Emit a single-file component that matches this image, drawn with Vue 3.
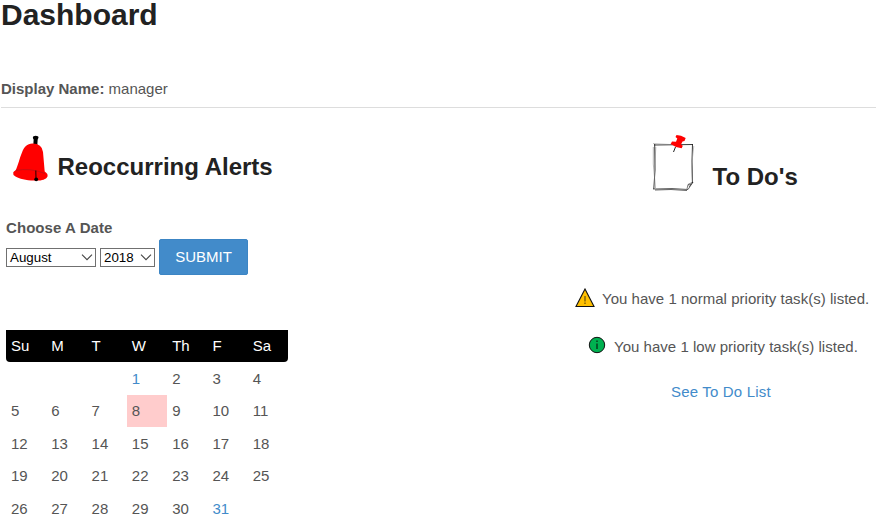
<script setup>
const days = ['Su', 'M', 'T', 'W', 'Th', 'F', 'Sa']
const cells = [...Array(3).fill(''), ...Array.from({ length: 31 }, (_, i) => i + 1)]
const linked = [1, 31]
</script>

<template>
  <main class="page">
    <h1>Dashboard</h1>
    <div class="who"><b>Display Name:</b> manager</div>
    <div class="columns">
      <section class="alerts">
        <div class="heading">
          <svg class="bell" width="36" height="47" viewBox="0 0 36 47">
            <path d="M23.300 10L23.800 2.500" stroke="#000" stroke-width="4" />
            <ellipse cx="23.700" cy="2.700" rx="2.800" ry="1.900" />
            <path d="M3.500 35.500C6 31 7.500 23 10 17.500C12 12 15 8.800 20.500 8.500Q30 8.500 31 17L32.700 36.500C35 38 36 39.500 35.500 41.500C34 45 28 46 22 45.500C14 45.500 7 43.500 3.500 41.500Q.5 39.500 1.200 37.500Q2 36.200 3.500 35.500Z" fill="#f00" />
            <path d="M3.500 35.500Q18 32.500 33 38.500" fill="none" stroke="#b51218" stroke-width=".7" />
            <path d="M23.800 35.500L24 44" stroke="#300" stroke-width="1.100" />
            <circle cx="24.200" cy="44.300" r="1.900" />
          </svg>
          <h2>Reoccurring Alerts</h2>
        </div>
        <label class="choose">Choose A Date</label>
        <div class="controls">
          <div class="select month">August
            <svg width="12" height="7" viewBox="0 0 12 7"><path d="M1 .7L6 5.700L11 .7" /></svg>
          </div>
          <div class="select year">2018
            <svg width="12" height="7" viewBox="0 0 12 7"><path d="M1 .7L6 5.700L11 .7" /></svg>
          </div>
          <button>SUBMIT</button>
        </div>
        <div class="week head"><span v-for="d in days" :key="d">{{ d }}</span></div>
        <div class="week body">
          <span v-for="(c, i) in cells" :key="i" :class="{ today: c === 8, link: linked.includes(c) }">{{ c }}</span>
        </div>
      </section>
      <section class="todo">
        <div class="heading">
          <svg class="note" width="44" height="57" viewBox="0 0 44 57" fill="none" stroke="#222">
            <path d="M2 10L41 9.500" stroke-width=".9" />
            <path d="M1 8.500L18 9.500" stroke="#888" stroke-width=".5" />
            <path d="M2.700 9L3 35L1.800 54" stroke-width=".9" />
            <path d="M1.300 12V29L3.500 53M3.800 12L2.500 38" stroke="#888" stroke-width=".6" />
            <path d="M40.500 9L40 26L40.500 48" stroke-width=".9" />
            <path d="M41.800 11L39.500 31L40.300 48" stroke="#999" stroke-width=".6" />
            <path d="M1 54L20 53.500L36 54.500L41 47M3 55L19 54.500L35 55.500" stroke-width=".7" />
            <path d="M35 54L36 49.500L41 47L37 52M36 50L39 49.500" stroke-width=".6" />
            <path d="M23.500 12L21.500 17" stroke-width="1" />
            <path d="M24.500 0L29 .7L33.700 3L32.500 6L30.500 6.500L29 9.500L30.800 10.700L29.700 13.300L24 12L18.700 9L20 6.500L24 6.700L25.300 3.500L23.500 2Z" fill="#f00" stroke="none" />
          </svg>
          <h2>To Do's</h2>
        </div>
        <div class="task normal">
          <svg width="20" height="20" viewBox="0 0 20 20">
            <path d="M10 1L19 18.500H1Z" fill="#ffc000" stroke="#111" stroke-width="1.100" />
            <path d="M10 8V13.500M10 14.500V16" stroke="#71580c" stroke-width="1.300" />
          </svg>
          <span>You have 1 normal priority task(s) listed.</span>
        </div>
        <div class="task low">
          <svg width="18" height="18" viewBox="0 0 18 18">
            <circle cx="9" cy="9" r="7.700" fill="#00b050" stroke="#111" stroke-width="1" />
            <path d="M9 4.500V6M9 7.500V13" stroke="#063b1e" stroke-width="1.500" />
          </svg>
          <span>You have 1 low priority task(s) listed.</span>
        </div>
        <a class="link see">See To Do List</a>
      </section>
    </div>
  </main>
</template>

<style>
body { background: #fff; overflow: hidden; }
</style>

<style scoped>
.page { box-sizing: border-box; height: 528px; padding-left: 1px; font: 15px/20px "Liberation Sans", Arial, sans-serif; color: #555; }
h1, h2 { margin: 0; color: #222; font-weight: bold; }
h1 { font-size: 30px; line-height: 30px; }
h2 { font-size: 24px; line-height: 28px; white-space: nowrap; }
.who { margin-top: 49px; height: 28px; border-bottom: 1px solid #ddd; }
.columns { display: flex; justify-content: space-between; }
.alerts { width: 282px; padding-left: 5px; }
.heading { display: flex; align-items: flex-start; height: 110px; box-sizing: border-box; }
.alerts .heading { padding: 27px 0 0 6px; }
.alerts h2 { margin: 18px 0 0 9.5px; }
.choose { display: block; font-weight: bold; letter-spacing: .07px; }
.controls { display: flex; gap: 4px; align-items: center; margin-top: 1px; height: 36px; }
.select { box-sizing: border-box; height: 19px; border: 1px solid #707070; display: flex; align-items: center; justify-content: space-between; padding: 0 2px 0 3px; font-size: 13.333px; line-height: 17px; color: #000; margin-top: 1px; }
.select svg { fill: none; stroke: #444; stroke-width: 1.1; }
.month { width: 90px; }
.year { width: 55px; }
button { width: 89px; height: 36px; padding: 0; border: 1px solid #3c85c4; border-radius: 2px; background: #428bca; color: #fff; font: 15px/34px "Liberation Sans", Arial, sans-serif; }
.week { display: grid; grid-template-columns: repeat(7, 40.286px); }
.week span { padding-left: 5px; }
.head { margin-top: 55px; background: #000; color: #fff; line-height: 32px; border-radius: 0 0 4px 4px; }
.body { grid-template-rows: 33px 32px 33px 32px 33px; line-height: 33px; }
.body span:nth-child(n+8):nth-child(-n+14), .body span:nth-child(n+22):nth-child(-n+28) { line-height: 32px; }
.today { background: #fcc; }
.link { color: #428bca; }
.todo { width: 309px; display: flex; flex-direction: column; }
.todo .heading { padding: 27px 0 0 85px; }
.todo h2 { margin: 28px 0 0 16.5px; }
.task { display: flex; align-items: center; white-space: nowrap; letter-spacing: .025px; }
.task svg { flex: none; }
.normal { padding-left: 8px; margin-top: 71px; gap: 7px; }
.normal svg { margin-top: -2px; }
.low { padding-left: 21px; margin-top: 28px; gap: 8px; }
.low svg { margin-top: -4px; }
.see { padding-left: 104px; margin-top: 25px; letter-spacing: .18px; }
</style>
